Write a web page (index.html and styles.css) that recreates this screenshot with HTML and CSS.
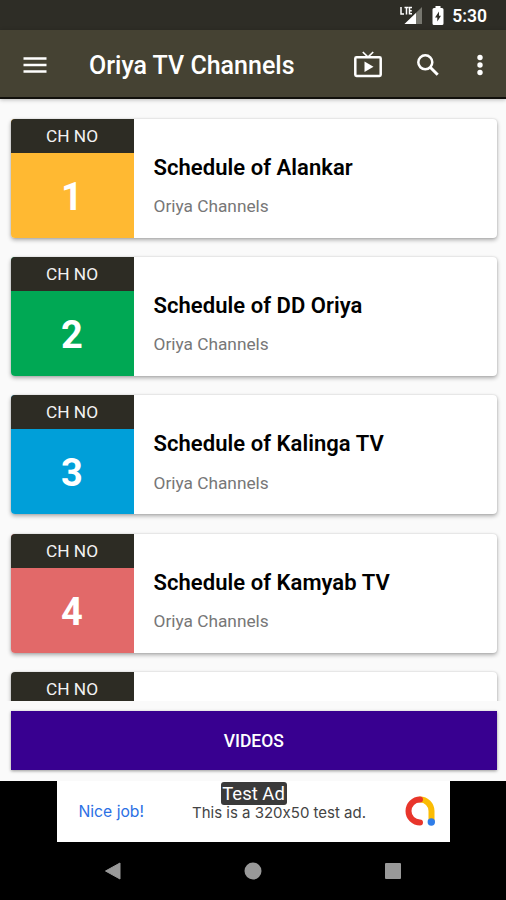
FILE: index.html
```html
<!DOCTYPE html>
<html lang="en">
<head>
  <meta charset="UTF-8" />
  <meta name="viewport" content="width=device-width, initial-scale=1.0"/>
  <title>Oriya TV Channels</title>
  <link rel="stylesheet" href="styles.css">
</head>
<body>
  <div class="status-bar">
    <svg class="signal" width="23" height="20" viewBox="0 0 23 20">
      <path d="M22 2v17H4.500z" fill="#77776f"/>
      <path d="M16 8v11H4.500z" fill="#fff"/>
      <path d="M1 2v7h3M4.500 2.600h4M6.500 2.600V9.500M12 2.600H9.500V8.800H12M9.500 5.700h2.300" fill="none" stroke="#fff" stroke-width="1.500"/>
    </svg>
    <svg class="battery" width="12" height="20" viewBox="0 0 12 20">
      <path d="M3.500 0h5v2H10q1.500 0 1.500 1.500v14q0 1.500-1.500 1.500H2Q.5 19 .5 17.500v-14Q.5 2 2 2h1.500z" fill="#fff"/>
      <path d="M7 5.500L3 11.500h2.300v4L9 9.700H7z" fill="#2e2d26"/>
    </svg>
    <span class="clock">5:30</span>
  </div>

  <header class="app-bar">
    <svg class="menu-icon" width="24" height="18" viewBox="0 0 24 18">
      <path d="M.5 2.500h23M.5 9h23M.5 15.500h23" stroke="#fff" stroke-width="2.500"/>
    </svg>
    <h1>Oriya TV Channels</h1>
    <svg class="tv-icon" width="28" height="27" viewBox="0 0 28 27">
      <rect x="1.300" y="6.300" width="25.400" height="18.700" rx="1.200" fill="none" stroke="#fff" stroke-width="2.500"/>
      <path d="M8.800 1l5.200 5 5.200-5" fill="none" stroke="#fff" stroke-width="1.700"/>
      <path d="M10.500 10.500v10.400l9-5.200z" fill="#fff"/>
    </svg>
    <svg class="search-icon" width="24" height="24" viewBox="0 0 24 24">
      <circle cx="9.300" cy="9.300" r="7" fill="none" stroke="#fff" stroke-width="2.500"/>
      <path d="M14.200 14.200l7.500 7.500" stroke="#fff" stroke-width="3"/>
    </svg>
    <svg class="more-icon" width="8" height="22" viewBox="0 0 8 22">
      <g fill="#fff"><circle cx="4" cy="3.500" r="2.700"/><circle cx="4" cy="11" r="2.700"/><circle cx="4" cy="18.500" r="2.700"/></g>
    </svg>
  </header>

  <main class="channel-list">
    <article class="card">
      <div class="channel yellow"><span class="label">CH NO</span><span class="number">1</span></div>
      <div class="info"><h2>Schedule of Alankar</h2><p>Oriya Channels</p></div>
    </article>
    <article class="card">
      <div class="channel green"><span class="label">CH NO</span><span class="number">2</span></div>
      <div class="info"><h2>Schedule of DD Oriya</h2><p>Oriya Channels</p></div>
    </article>
    <article class="card">
      <div class="channel blue"><span class="label">CH NO</span><span class="number">3</span></div>
      <div class="info"><h2>Schedule of Kalinga TV</h2><p>Oriya Channels</p></div>
    </article>
    <article class="card">
      <div class="channel red"><span class="label">CH NO</span><span class="number">4</span></div>
      <div class="info"><h2>Schedule of Kamyab TV</h2><p>Oriya Channels</p></div>
    </article>
    <article class="card">
      <div class="channel"><span class="label">CH NO</span></div>
    </article>
  </main>

  <div class="actions">
    <button class="videos-btn">VIDEOS</button>
  </div>

  <div class="ad-row">
    <div class="ad">
      <span class="ad-tag">Test Ad</span>
      <span class="ad-title">Nice job!</span>
      <span class="ad-text">This is a 320x50 test ad.</span>
      <svg class="ad-logo" width="32" height="32" viewBox="0 0 32 32">
        <g fill="none" stroke-width="6" stroke-linecap="round">
          <path d="M16 4.500A11.500 11.500 0 0 1 27.500 16V26" stroke="#fbbc04"/>
          <path d="M16 4.500a11.500 11.500 0 0 0 0 23" stroke="#e8352b"/>
        </g>
        <circle cx="27.300" cy="27" r="3.700" fill="#2f7de9"/>
      </svg>
    </div>
  </div>

  <nav class="nav-bar">
    <svg width="18" height="18" viewBox="0 0 18 18"><path d="M1.500 9L16 1v16z" fill="#999" stroke="#999" stroke-linejoin="round"/></svg>
    <svg width="18" height="18" viewBox="0 0 18 18"><circle cx="9" cy="9" r="8.500" fill="#999"/></svg>
    <svg width="18" height="18" viewBox="0 0 18 18"><rect x="1" y="1" width="16" height="16" rx="1" fill="#999"/></svg>
  </nav>
</body>
</html>
```
FILE: styles.css
```css
*{margin:0;padding:0;box-sizing:border-box}
body{width:506px;height:900px;overflow:hidden;display:flex;flex-direction:column;font-family:Roboto,sans-serif;background:#fafafa;color:#000}
svg{display:block;flex:none}
.status-bar{height:30px;flex:none;display:flex;justify-content:flex-end;align-items:center;padding-right:19px;background:#2e2d26;color:#fff}
.signal{margin-right:9px}
.battery{margin-top:2px;margin-right:8px}
.clock{font-size:17.500px;font-weight:600;line-height:30px;padding-top:2px}
.app-bar{height:69px;flex:none;display:flex;align-items:center;padding:2px 22px 0 23px;background:#454233;border-bottom:2px solid #11100c;color:#fff;box-shadow:0 1px 4px rgba(0,0,0,.25);z-index:1}
.app-bar h1{font-size:25px;font-weight:500;line-height:32px;margin-left:42px;margin-right:auto;padding-top:2px}
.tv-icon{margin-right:34px}
.tv-icon,.search-icon{transform:translateX(1px)}
.search-icon{margin-right:37px}
.channel-list{height:602px;flex:none;overflow:hidden;padding:19.500px 9px 0 10.500px;display:flex;flex-direction:column;gap:19.400px}
.card{height:119px;flex:none;display:flex;border-radius:4px;background:#fff;box-shadow:0 2px 4px rgba(0,0,0,.32),0 0 2px rgba(0,0,0,.14)}
.channel{width:123px;display:flex;flex-direction:column;border-radius:4px 0 0 4px;overflow:hidden;color:#fff;text-align:center}
.label{height:34px;line-height:35px;background:#2d2c24;font-size:17.300px;color:#f2f2f2}
.number{flex:1;font-size:38px;font-weight:700;line-height:89px}
.yellow{background:#ffb932}
.green{background:#00a854}
.blue{background:#009fd9}
.red{background:#e26969}
.info{padding:34px 0 0 20px}
.info h2{font-size:22px;font-weight:600;line-height:29px;letter-spacing:.05px}
.info p{margin-top:12.500px;font-size:17.300px;line-height:24px;color:#777}
.actions{height:79.500px;flex:none;padding:10px 9px 0 10.500px}
.videos-btn{display:block;width:100%;height:59px;border:none;background:#380090;color:#fff;font-family:inherit;font-size:17.500px;font-weight:500;line-height:60px;box-shadow:0 1px 3px rgba(0,0,0,.4)}
.ad-row{height:61.500px;flex:none;display:flex;justify-content:center;background:#000}
.ad{position:relative;width:393px;height:61px;display:flex;align-items:center;background:#fff;padding:0 14px 0 22px;font-family:Inter,sans-serif;font-feature-settings:"calt" 0}
.ad-tag{position:absolute;left:164px;top:1px;width:66px;height:23px;border-radius:3px;background:#3a3a3a;color:#fff;font-family:Roboto,sans-serif;font-size:18.500px;line-height:24px;text-align:center}
.ad-title{font-size:15.700px;padding-top:1px;color:#2b70e4}
.ad-text{margin-left:48px;margin-right:auto;padding-top:2px;font-size:15px;color:#444}
.nav-bar{height:58px;flex:none;display:flex;justify-content:center;align-items:center;gap:122px;background:#000}
```
